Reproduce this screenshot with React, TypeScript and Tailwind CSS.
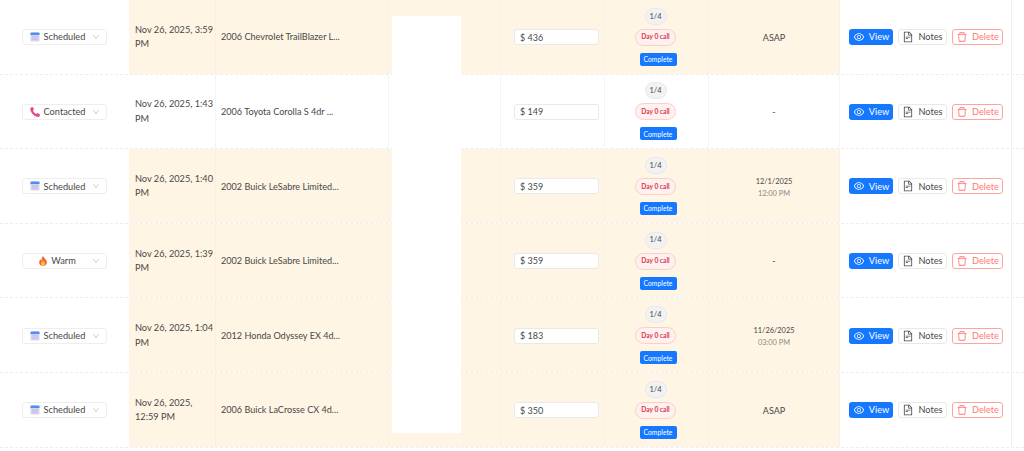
import { AiOutlineDelete, AiOutlineDown, AiOutlineEye, AiOutlineFileText } from 'react-icons/ai';

type Status = 'Scheduled' | 'Contacted' | 'Warm';

type Lead = {
  status: Status;
  created: string[];
  vehicle: string;
  price: number;
  pickup: string[];
  highlighted: boolean;
};

const LEADS: Lead[] = [
  { status: 'Scheduled', created: ['Nov 26, 2025, 3:59', 'PM'], vehicle: '2006 Chevrolet TrailBlazer L...', price: 436, pickup: ['ASAP'], highlighted: true },
  { status: 'Contacted', created: ['Nov 26, 2025, 1:43', 'PM'], vehicle: '2006 Toyota Corolla S 4dr ...', price: 149, pickup: ['-'], highlighted: false },
  { status: 'Scheduled', created: ['Nov 26, 2025, 1:40', 'PM'], vehicle: '2002 Buick LeSabre Limited...', price: 359, pickup: ['12/1/2025', '12:00 PM'], highlighted: true },
  { status: 'Warm', created: ['Nov 26, 2025, 1:39', 'PM'], vehicle: '2002 Buick LeSabre Limited...', price: 359, pickup: ['-'], highlighted: true },
  { status: 'Scheduled', created: ['Nov 26, 2025, 1:04', 'PM'], vehicle: '2012 Honda Odyssey EX 4d...', price: 183, pickup: ['11/26/2025', '03:00 PM'], highlighted: true },
  { status: 'Scheduled', created: ['Nov 26, 2025,', '12:59 PM'], vehicle: '2006 Buick LaCrosse CX 4d...', price: 350, pickup: ['ASAP'], highlighted: true },
];

function StatusIcon({ status }: { status: Status }) {
  if (status === 'Scheduled') {
    return (
      <svg width="10" height="10" viewBox="0 0 10 10" className="shrink-0">
        <rect x="0.5" y="0.5" width="9" height="9" rx="1" fill="#d9d3f2" />
        <path d="M0.5 1.5a1 1 0 0 1 1-1h7a1 1 0 0 1 1 1V3h-9z" fill="#4a90f0" />
        <path d="M2 4.5h6M2 6h6M2 7.5h6" stroke="#bdb5e4" strokeWidth="0.6" />
      </svg>
    );
  }
  if (status === 'Contacted') {
    return (
      <svg width="10" height="10" viewBox="0 0 10 10" className="shrink-0">
        <path d="M1 .5 2.8 0 4 2.6 3 3.5C3.4 5 4.600 6.300 6.200 7L7.200 6.100 10 7.500 9.400 9.400C9 10 8 10 7 9.800 3.500 9 .800 5.500.300 2.300.200 1.400.500.800 1 .5z" fill="#e8458b" />
      </svg>
    );
  }
  return (
    <svg width="8" height="10" viewBox="0 0 9 11" className="shrink-0">
      <path d="M4.600 0C5 1.800 8.800 3.800 8.800 7.100 8.800 9.400 6.900 11 4.500 11S.2 9.400.2 7.100C.2 5.500 1 4.400 1.900 3.600 2 4.500 2.400 5 2.900 5.200 2.700 3.200 3.400 1.200 4.600 0z" fill="#ee6a33" />
      <path d="M4.500 5C4.800 6 6.700 7 6.700 8.600 6.700 10 5.700 11 4.500 11S2.300 10 2.300 8.600C2.300 7 4 6.300 4.500 5z" fill="#fbbf4c" />
    </svg>
  );
}

function LeadRow({ lead }: { lead: Lead }) {
  const tint = lead.highlighted ? 'bg-[#fef5e4] border-[#f8f0e2]' : 'bg-white border-[#f4f4f4]';
  const cell = `border-r pt-[1px] ${tint}`;

  return (
    <div className="grid h-[74.6px] grid-cols-[129px_87px_173px_112px_104px_104px_131px_172px] border-b border-dashed border-[#eeeeee] text-[#484848]">
      <div className="flex items-center pl-[22px] pt-[1px]">
        <div className="relative flex h-[16px] w-[85px] items-center justify-center gap-[4px] rounded-[3px] border border-[#eeeeee] bg-white pr-[14px] text-[9.2px]">
          <StatusIcon status={lead.status} />
          <span>{lead.status}</span>
          <AiOutlineDown className="absolute right-[6px] top-[3px] text-[8px] text-[#c4c4c4]" />
        </div>
      </div>

      <div className={`flex flex-col justify-center pl-[6px] text-[9.2px] leading-[14.5px] ${cell}`}>
        {lead.created.map((line) => (
          <span key={line} className="whitespace-nowrap">{line}</span>
        ))}
      </div>

      <div className={`flex items-center pl-[5px] text-[9.1px] whitespace-nowrap ${cell}`}>{lead.vehicle}</div>

      <div className={cell} />

      <div className={`flex items-center pl-[13px] ${cell}`}>
        <div className="flex h-[16px] w-[85px] items-center rounded-[3px] border border-[#e9e9e9] bg-white pl-[5px] text-[9px]">
          $ {lead.price}
        </div>
      </div>

      <div className={`flex flex-col items-center justify-center pb-[1px] ${cell}`}>
        <span className="ml-[-2px] flex h-[17px] w-[22px] items-center justify-center rounded-full border border-[#e9e9e9] bg-[#f2f2f2] text-[7.5px]">1/4</span>
        <span className="ml-[-2px] mt-[4px] flex h-[17px] w-[41px] items-center justify-center rounded-full border border-[#ffccc7] bg-[#fff1f0] text-[6.6px] font-bold whitespace-nowrap text-[#d9364f]">Day 0 call</span>
        <span className="ml-[3px] mt-[7px] flex h-[13px] w-[37px] items-center justify-center rounded-[2px] bg-[#1677ff] text-[6.8px] text-white">Complete</span>
      </div>

      <div className={`flex flex-col items-center justify-center ${cell}`}>
        {lead.pickup.length === 1 ? (
          <span className="text-[9px]">{lead.pickup[0]}</span>
        ) : (
          <div className="mt-[3px] flex flex-col items-center">
            <span className="text-[7.4px] leading-[12px]">{lead.pickup[0]}</span>
            <span className="text-[7.4px] leading-[12px] text-[#8c8c8c]">{lead.pickup[1]}</span>
          </div>
        )}
      </div>

      <div className="flex items-center gap-[5px] border-r border-[#f1f1f1] bg-white pl-[9px] pt-[1px] text-[9.2px]">
        <button type="button" className="flex h-[16px] w-[44px] items-center justify-center gap-[4px] rounded-[3px] bg-[#1677ff] text-white">
          <AiOutlineEye className="text-[12px]" />
          View
        </button>
        <button type="button" className="flex h-[16px] w-[49px] items-center justify-center gap-[4px] rounded-[3px] border border-[#e9e9e9] bg-white">
          <AiOutlineFileText className="text-[12px]" />
          Notes
        </button>
        <button type="button" className="flex h-[16px] w-[51px] items-center justify-center gap-[4px] rounded-[3px] border border-[#ffa39e] bg-white text-[#ff7875]">
          <AiOutlineDelete className="text-[12px]" />
          Delete
        </button>
      </div>
    </div>
  );
}

export default function App() {
  return (
    <div className="relative h-[451px] w-[1024px] overflow-hidden bg-white font-['Lato','Liberation_Sans',sans-serif]">
      {LEADS.map((lead) => (
        <LeadRow key={lead.created.join(' ')} lead={lead} />
      ))}
      {/* blanked out column */}
      <div className="absolute left-[392px] top-[16px] h-[417px] w-[69px] bg-white" />
    </div>
  );
}
